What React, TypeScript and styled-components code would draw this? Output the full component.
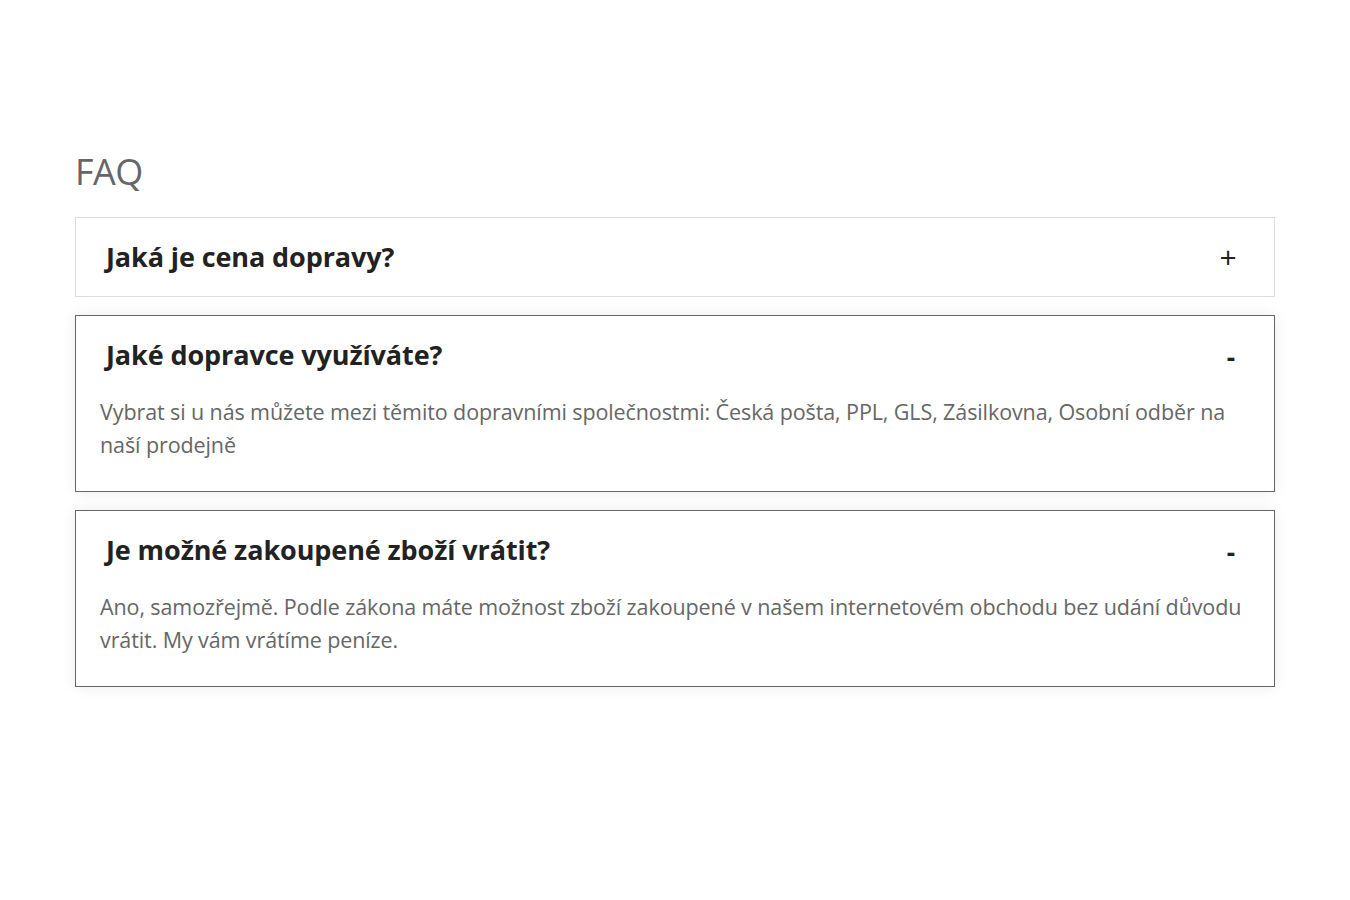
import { useState } from "react";
import styled, { createGlobalStyle } from "styled-components";

const GlobalStyle = createGlobalStyle`
	body {
		margin: 0;
		background: #fff;
		font-family: "Open Sans", "Liberation Sans", sans-serif;
	}
	* { box-sizing: border-box; }
`;

const Page = styled.div`
	padding: 149px 75px 80px;
`;

const Heading = styled.h2`
	margin: 0 0 22px 0;
	font-size: 36px;
	font-weight: 400;
	line-height: 46px;
	letter-spacing: -0.6px;
	color: #666;
`;

const List = styled.div`
	display: flex;
	flex-direction: column;
	gap: 18px;
`;

const Item = styled.div<{ open: boolean }>`
	background: #fff;
	border: 1px solid ${({ open }) => open ? "#666" : "#ddd"};
	${({ open }) => open && `box-shadow: 0 0 14px rgba(0,0,0,0.08);`}
`;

const Question = styled.button`
	display: flex;
	align-items: center;
	justify-content: space-between;
	width: 100%;
	padding: 20px 37px 20px 30px;
	border: 0;
	background: none;
	cursor: pointer;
	font-family: inherit;
	text-align: left;
`;

const QuestionText = styled.span`
	font-size: 27px;
	font-weight: 700;
	line-height: 38px;
	letter-spacing: -0.1px;
	color: #222;
`;

const Toggle = styled.span<{ open: boolean }>`
	width: 18px;
	text-align: center;
	font-size: ${({ open }) => open ? 26 : 30}px;
	font-weight: ${({ open }) => open ? 700 : 400};
	line-height: 38px;
	color: #222;
	${({ open }) => open && `transform: translate(3px, 2px);`}
`;

const Answer = styled.div`
	padding: 1px 20px 30px 24px;
	font-size: 21.5px;
	line-height: 33px;
	letter-spacing: -0.1px;
	color: #666;
`;

const faq = [
	{
		q: "Jaká je cena dopravy?",
		a: "Cena dopravy se liší podle zvoleného dopravce.",
		open: false,
	},
	{
		q: "Jaké dopravce využíváte?",
		a: "Vybrat si u nás můžete mezi těmito dopravními společnostmi: Česká pošta, PPL, GLS, Zásilkovna, Osobní odběr na naší prodejně",
		open: true,
	},
	{
		q: "Je možné zakoupené zboží vrátit?",
		a: "Ano, samozřejmě. Podle zákona máte možnost zboží zakoupené v našem internetovém obchodu bez udání důvodu vrátit. My vám vrátíme peníze.",
		open: true,
	},
];

function FaqItem({ q, a, initial }: { q: string, a: string, initial: boolean }) {
	const [ open, setOpen ] = useState(initial);

	return (
		<Item open={open}>
			<Question onClick={() => setOpen(!open)}>
				<QuestionText>{q}</QuestionText>
				<Toggle open={open}>{open ? "-" : "+"}</Toggle>
			</Question>
			{open && <Answer>{a}</Answer>}
		</Item>
	);
}

export default function App() {
	return (
		<>
			<GlobalStyle />
			<Page>
				<Heading>FAQ</Heading>
				<List>
					{faq.map((item) => (
						<FaqItem
							key={item.q}
							q={item.q}
							a={item.a}
							initial={item.open}
						/>
					))}
				</List>
			</Page>
		</>
	);
}
